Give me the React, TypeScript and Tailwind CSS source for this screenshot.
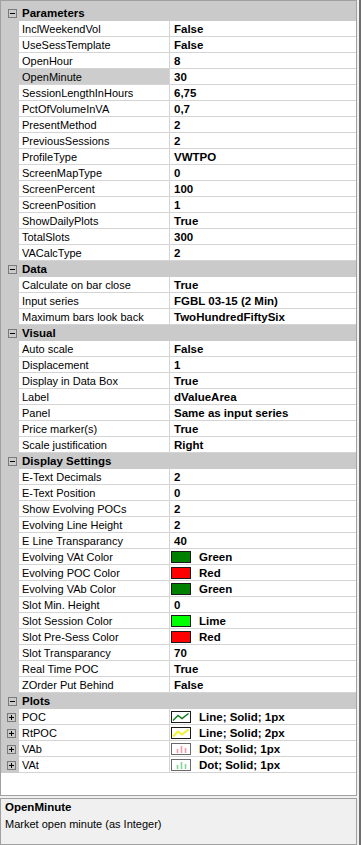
import React from "react";

type Val =
  | string
  | { swatch: string; text: string }
  | { plot: "poc" | "rtpoc" | "vab" | "vat"; text: string };

type Item = { label: string; value: Val; selected?: boolean; expand?: boolean };

const sections: { title: string; items: Item[] }[] = [
  {
    title: "Parameters",
    items: [
      { label: "InclWeekendVol", value: "False" },
      { label: "UseSessTemplate", value: "False" },
      { label: "OpenHour", value: "8" },
      { label: "OpenMinute", value: "30", selected: true },
      { label: "SessionLengthInHours", value: "6,75" },
      { label: "PctOfVolumeInVA", value: "0,7" },
      { label: "PresentMethod", value: "2" },
      { label: "PreviousSessions", value: "2" },
      { label: "ProfileType", value: "VWTPO" },
      { label: "ScreenMapType", value: "0" },
      { label: "ScreenPercent", value: "100" },
      { label: "ScreenPosition", value: "1" },
      { label: "ShowDailyPlots", value: "True" },
      { label: "TotalSlots", value: "300" },
      { label: "VACalcType", value: "2" },
    ],
  },
  {
    title: "Data",
    items: [
      { label: "Calculate on bar close", value: "True" },
      { label: "Input series", value: "FGBL 03-15 (2 Min)" },
      { label: "Maximum bars look back", value: "TwoHundredFiftySix" },
    ],
  },
  {
    title: "Visual",
    items: [
      { label: "Auto scale", value: "False" },
      { label: "Displacement", value: "1" },
      { label: "Display in Data Box", value: "True" },
      { label: "Label", value: "dValueArea" },
      { label: "Panel", value: "Same as input series" },
      { label: "Price marker(s)", value: "True" },
      { label: "Scale justification", value: "Right" },
    ],
  },
  {
    title: "Display Settings",
    items: [
      { label: "E-Text Decimals", value: "2" },
      { label: "E-Text Position", value: "0" },
      { label: "Show Evolving POCs", value: "2" },
      { label: "Evolving Line Height", value: "2" },
      { label: "E Line Transparancy", value: "40" },
      { label: "Evolving VAt Color", value: { swatch: "#008000", text: "Green" } },
      { label: "Evolving POC Color", value: { swatch: "#ff0000", text: "Red" } },
      { label: "Evolving VAb Color", value: { swatch: "#008000", text: "Green" } },
      { label: "Slot Min. Height", value: "0" },
      { label: "Slot Session Color", value: { swatch: "#00ff00", text: "Lime" } },
      { label: "Slot Pre-Sess Color", value: { swatch: "#ff0000", text: "Red" } },
      { label: "Slot Transparancy", value: "70" },
      { label: "Real Time POC", value: "True" },
      { label: "ZOrder Put Behind", value: "False" },
    ],
  },
  {
    title: "Plots",
    items: [
      { label: "POC", value: { plot: "poc", text: "Line; Solid; 1px" }, expand: true },
      { label: "RtPOC", value: { plot: "rtpoc", text: "Line; Solid; 2px" }, expand: true },
      { label: "VAb", value: { plot: "vab", text: "Dot; Solid; 1px" }, expand: true },
      { label: "VAt", value: { plot: "vat", text: "Dot; Solid; 1px" }, expand: true },
    ],
  },
];

function ToggleBox({ plus }: { plus?: boolean }) {
  return (
    <svg width="9" height="9" viewBox="0 0 9 9" className="block">
      <rect x="0.5" y="0.5" width="8" height="8" fill="none" stroke="#7a7a7a" />
      <line x1="2" y1="4.5" x2="7" y2="4.5" stroke="#000" />
      {plus && <line x1="4.5" y1="2" x2="4.5" y2="7" stroke="#000" />}
    </svg>
  );
}

function PlotIcon({ kind }: { kind: "poc" | "rtpoc" | "vab" | "vat" }) {
  if (kind === "poc" || kind === "rtpoc") {
    const color = kind === "poc" ? "#0f7a1a" : "#f2f230";
    return (
      <svg width="20" height="12" viewBox="0 0 20 12" className="block">
        <rect x="0.5" y="0.5" width="19" height="11" fill="#fff" stroke="#1a1a1a" />
        <polyline
          points="2,9.5 7,4.5 11,7.5 17.5,2.5"
          fill="none"
          stroke={color}
          strokeWidth={kind === "poc" ? 1.4 : 2}
        />
      </svg>
    );
  }
  const color = kind === "vab" ? "#f59aa6" : "#84d494";
  return (
    <svg width="20" height="12" viewBox="0 0 20 12" className="block">
      <rect x="0.5" y="0.5" width="19" height="11" fill="#fff" stroke="#6a6a6a" />
      <line x1="6.5" y1="10" x2="6.5" y2="6" stroke={color} strokeWidth="1.6" />
      <line x1="10.5" y1="10" x2="10.5" y2="3" stroke={color} strokeWidth="1.6" />
      <line x1="14.5" y1="10" x2="14.5" y2="5" stroke={color} strokeWidth="1.6" />
    </svg>
  );
}

function ValueCell({ value }: { value: Val }) {
  if (typeof value === "string") {
    return <span className="pl-[4px] pt-[1px] font-bold text-[11.5px] leading-[14px]">{value}</span>;
  }
  if ("swatch" in value) {
    return (
      <div className="flex items-center pl-[1px]">
        <span
          className="block w-[20px] h-[12px] border border-[#1a1a1a]"
          style={{ backgroundColor: value.swatch }}
        />
        <span className="pl-[8px] pt-[1px] font-bold text-[11.5px] leading-[14px]">{value.text}</span>
      </div>
    );
  }
  return (
    <div className="flex items-center pl-[1px]">
      <PlotIcon kind={value.plot} />
      <span className="pl-[8px] pt-[1px] font-bold text-[11.5px] leading-[14px]">{value.text}</span>
    </div>
  );
}

export default function App() {
  return (
    <div
      className="flex w-[361px] h-[845px] overflow-hidden bg-[#f0f0f0] text-black"
      style={{ fontFamily: '"Liberation Sans", Arial, sans-serif' }}
    >
      <div className="flex flex-col w-[357px]">
        {/* Property grid */}
        <div className="h-[796px] bg-white border border-[#a0a0a0] flex flex-col">
          {sections.map((sec, si) => (
            <div key={sec.title} className="flex flex-col">
              <div
                className={`flex items-end bg-[#cacaca] ${si === 0 ? "h-[20px]" : "h-[16px]"}`}
              >
                <div className="h-[16px] flex items-center pl-[7px] w-[21px]">
                  <ToggleBox />
                </div>
                <span className="h-[16px] pt-[1px] leading-[15px] font-bold text-[11.5px]">{sec.title}</span>
              </div>
              {sec.items.map((it) => (
                <div key={it.label} className="flex h-[16px] text-[11px] leading-[14px]">
                  <div className="w-[18px] bg-[#cacaca] flex items-center pl-[6px]">
                    {it.expand && <ToggleBox plus />}
                  </div>
                  <div
                    className={`w-[151px] pl-[3px] pt-[1px] border-b border-r border-[#d4d4d4] whitespace-nowrap overflow-hidden ${
                      it.selected ? "bg-[#cdcdcd]" : "bg-white"
                    }`}
                  >
                    {it.label}
                  </div>
                  <div className="flex-1 flex items-center border-b border-[#d4d4d4] whitespace-nowrap overflow-hidden">
                    <ValueCell value={it.value} />
                  </div>
                </div>
              ))}
            </div>
          ))}
        </div>
        {/* Description panel */}
        <div className="mt-[2px] flex-1 border border-[#a0a0a0] bg-[#f0f0f0] pl-[4px] pt-[1px]">
          <div className="font-bold text-[11.5px] leading-[15px]">OpenMinute</div>
          <div className="text-[11px] leading-[15px] mt-[2px]">Market open minute (as Integer)</div>
        </div>
      </div>
      <div className="w-[4px] flex">
        <div className="w-[2px] bg-[#f0f0f0]" />
        <div className="w-[2px] bg-[#6e6e6e]" />
      </div>
    </div>
  );
}
